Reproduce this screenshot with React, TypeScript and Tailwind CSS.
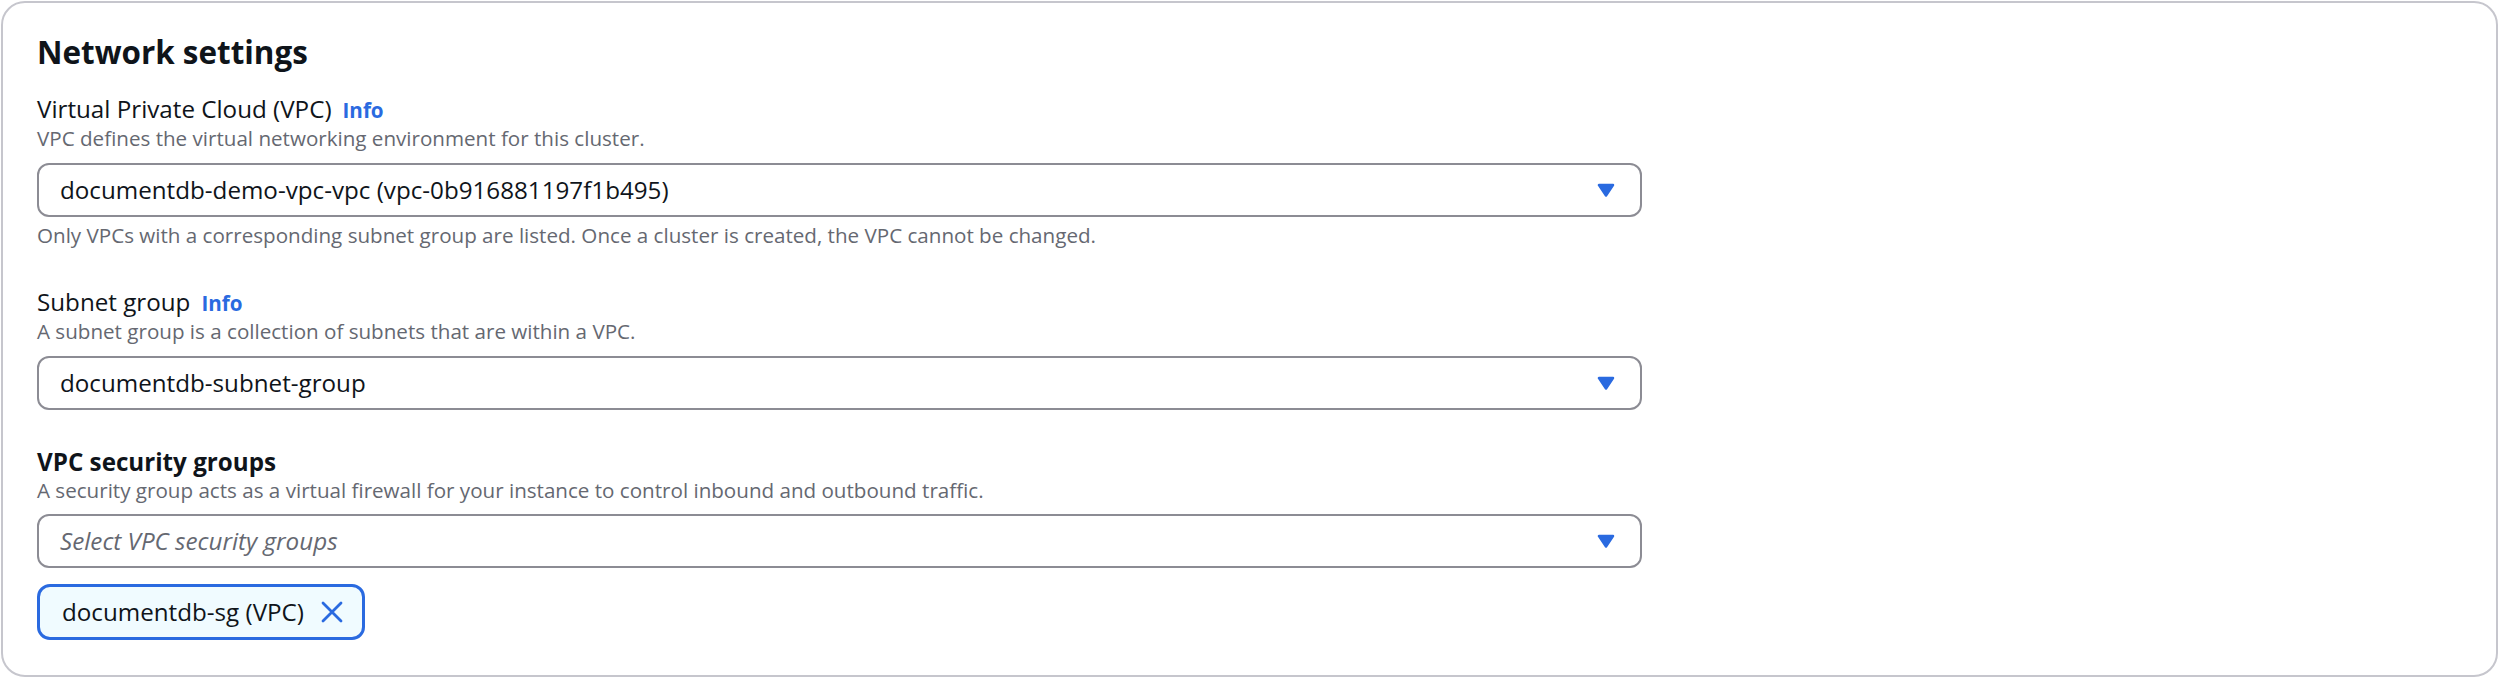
import React from "react";

const Arrow = () => (
  <svg width="18" height="14" viewBox="0 0 18 14" className="shrink-0">
    <path d="M2 2 L16 2 L9 12.5 Z" fill="#2a6ae0" stroke="#2a6ae0" strokeWidth="2.5" strokeLinejoin="round" />
  </svg>
);

const XIcon = () => (
  <svg width="22" height="22" viewBox="0 0 22 22" className="shrink-0">
    <path d="M2 2 L20 20 M20 2 L2 20" stroke="#2a6ae0" strokeWidth="2.8" strokeLinecap="round" fill="none" />
  </svg>
);

function Select({ value, placeholder }: { value?: string; placeholder?: string }) {
  return (
    <div className="mt-[11px] flex h-[54px] w-[1605px] items-center justify-between rounded-[12px] border-2 border-[#8c8c94] bg-white pl-[21px] pr-[25px]">
      {value ? (
        <span className="text-[24.2px] leading-[32px] text-[#0f141a]">{value}</span>
      ) : (
        <span className="text-[24.2px] leading-[32px] italic text-[#656871]">{placeholder}</span>
      )}
      <Arrow />
    </div>
  );
}

function Label({ text, info, bold }: { text: string; info?: boolean; bold?: boolean }) {
  return (
    <div className="flex items-baseline leading-[32px]">
      <span className={"text-[24.2px] text-[#0f141a] " + (bold ? "font-bold" : "")}>{text}</span>
      {info && <span className="ml-[11px] text-[20.6px] font-bold text-[#2a6ae0]">Info</span>}
    </div>
  );
}

function Desc({ text, className }: { text: string; className?: string }) {
  return <div className={"text-[20.6px] leading-[25.6px] text-[#656871] " + (className ?? "")}>{text}</div>;
}

export default function App() {
  return (
    <div className="h-[678px] w-[2500px] bg-white p-px" style={{ fontFamily: '"Open Sans", "Noto Sans", sans-serif' }}>
      <div className="h-[676px] w-[2497px] rounded-[24px] border-2 border-[#c6c6cd] pl-[34px] pt-[31px]">
        <h2 className="text-[31.4px] font-bold leading-[36px] text-[#0f141a]">Network settings</h2>

        <div className="mt-[23px]">
          <Label text="Virtual Private Cloud (VPC)" info />
          <Desc text="VPC defines the virtual networking environment for this cluster." />
          <Select value="documentdb-demo-vpc-vpc (vpc-0b916881197f1b495)" />
          <Desc className="mt-[6px]" text="Only VPCs with a corresponding subnet group are listed. Once a cluster is created, the VPC cannot be changed." />
        </div>

        <div className="mt-[38px]">
          <Label text="Subnet group" info />
          <Desc text="A subnet group is a collection of subnets that are within a VPC." />
          <Select value="documentdb-subnet-group" />
        </div>

        <div className="mt-[36px]">
          <Label text="VPC security groups" bold />
          <Desc text="A security group acts as a virtual firewall for your instance to control inbound and outbound traffic." />
          <Select placeholder="Select VPC security groups" />
          <div className="mt-[16px] flex h-[56px] w-fit items-center gap-[17px] rounded-[13px] border-[3px] border-[#2a6ae0] bg-[#f0fbff] pl-[22px] pr-[19px]">
            <span className="text-[24.2px] leading-[32px] text-[#0f141a]">documentdb-sg (VPC)</span>
            <XIcon />
          </div>
        </div>
      </div>
    </div>
  );
}
